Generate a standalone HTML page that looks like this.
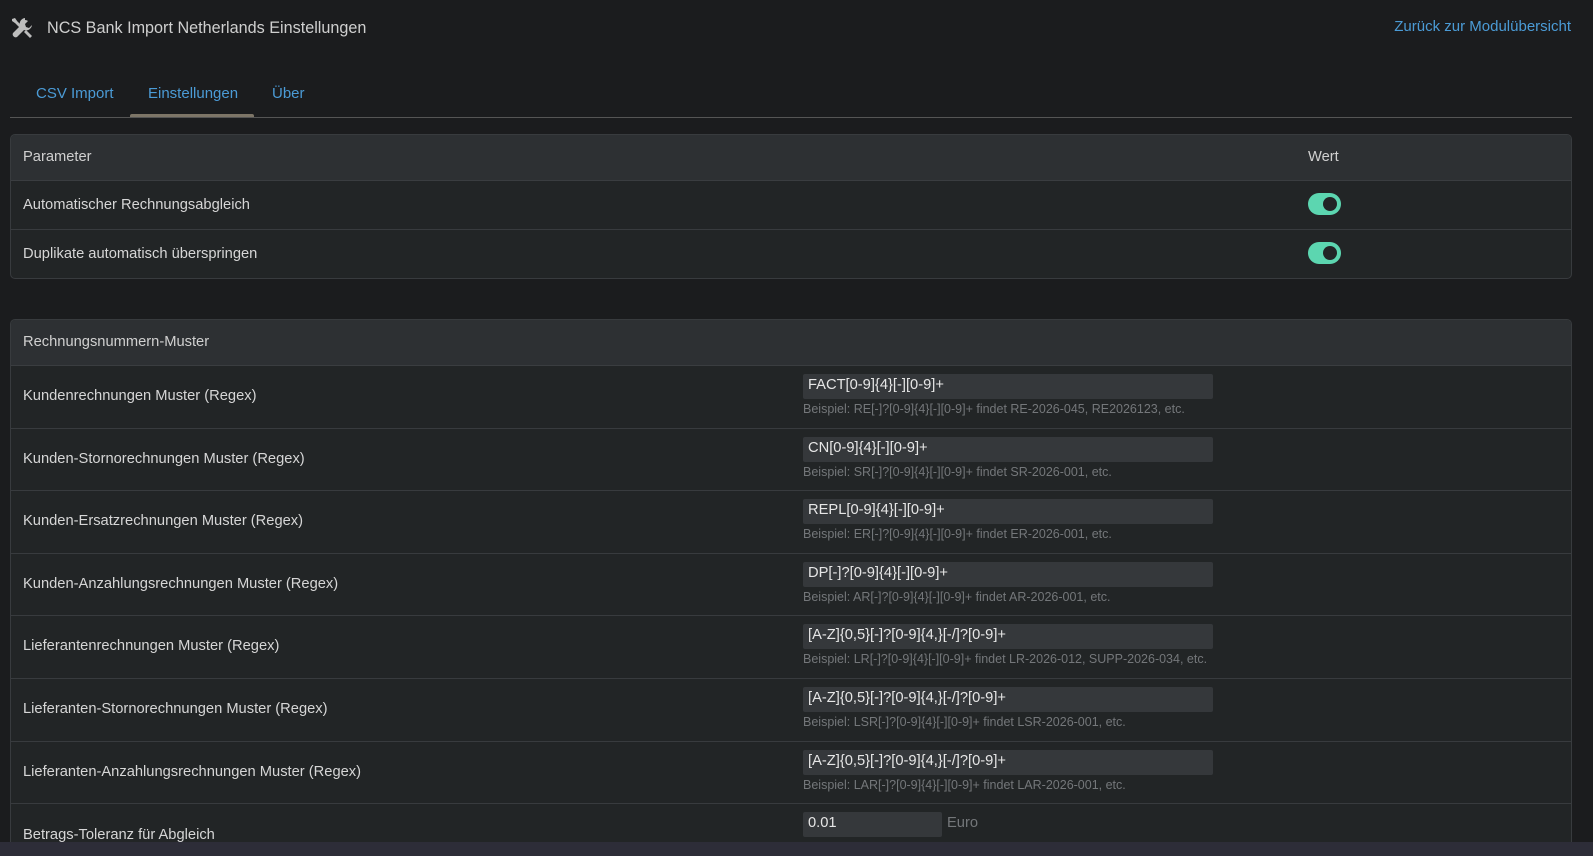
<!DOCTYPE html>
<html><head><meta charset="utf-8"><style>
*{box-sizing:border-box;margin:0;padding:0}
html,body{width:1593px;height:856px;overflow:hidden}
body{background:#1b1c1e;font-family:"Liberation Sans",sans-serif;color:#d6d6d6;position:relative}
.abs{position:absolute}
.title{left:47px;top:19px;font-size:16.2px;color:#cfcfcf}
.link{right:22px;top:18px;font-size:15px;color:#4b9bd6}
.tab{top:85px;font-size:15px;color:#4b9bd6}
.card{position:absolute;left:10px;width:1562px;background:#222526;border:1px solid #383b3e;border-radius:5px;overflow:hidden}
.hd{background:#2d3033;border-bottom:1px solid #3a3d40;font-size:14.7px;color:#d0d0d0;position:relative}
.row{position:relative;border-bottom:1px solid #383b3e;font-size:14.7px}
.lbl{position:absolute;left:12px}
.tg{position:absolute;left:1297px;width:33px;height:22px;border-radius:11px;background:#5cd6b0}
.tg:after{content:"";position:absolute;right:4px;top:4px;width:14px;height:14px;border-radius:50%;background:#222526}
.inp{position:absolute;left:792px;width:410px;height:25px;background:#35383b;border-radius:2px;color:#e6e6e6;font-size:14.7px;padding:3px 5px}
.hint{position:absolute;left:792px;font-size:12.5px;color:#74777a}
</style></head><body>
<svg class="abs" style="left:10px;top:16px" width="24" height="24" viewBox="0 0 24 24" fill="#bdbdbd"><path d="M3 5l2-2 8 8-2 2z"/><path d="M2 3l3-1 2 3-2 2-3-2z"/><path d="M15 2a6 6 0 0 0-5 8L3 17a3 3 0 0 0 4 4l7-7a6 6 0 0 0 8-5l-3 3-3-1-1-3 3-3a6 6 0 0 0-3-1z"/><path d="M14 16l2-2 6 6-2 2z"/></svg>
<div class="abs title">NCS Bank Import Netherlands Einstellungen</div>
<div class="abs link">Zurück zur Modulübersicht</div>
<div class="abs tab" style="left:36px">CSV Import</div>
<div class="abs tab" style="left:148px">Einstellungen</div>
<div class="abs tab" style="left:272px">Über</div>
<div class="abs" style="left:10px;top:117px;width:1562px;height:1px;background:#555"></div>
<div class="abs" style="left:130px;top:114px;width:124px;height:3px;background:#7d7567;border-radius:2px 2px 0 0"></div>

<div class="card" style="top:134px;height:145px">
<div class="hd" style="height:46px"><span class="lbl" style="top:14px">Parameter</span><span class="lbl" style="left:1297px;top:14px">Wert</span></div>
<div class="row" style="height:49px"><span class="lbl" style="top:16px">Automatischer Rechnungsabgleich</span><div class="tg" style="top:12px"></div></div>
<div class="row" style="height:49px;border:0"><span class="lbl" style="top:16px">Duplikate automatisch überspringen</span><div class="tg" style="top:12px"></div></div>
</div>

<div class="card" style="top:319px;height:560px">
<div class="hd" style="height:46px"><span class="lbl" style="top:14px">Rechnungsnummern-Muster</span></div>
<div class="row" style="height:63px"><span class="lbl" style="top:22px">Kundenrechnungen Muster (Regex)</span><div class="inp" style="top:8px">FACT[0-9]{4}[-][0-9]+</div><div class="hint" style="top:36px">Beispiel: RE[-]?[0-9]{4}[-][0-9]+ findet RE-2026-045, RE2026123, etc.</div></div>
<div class="row" style="height:62px"><span class="lbl" style="top:22px">Kunden-Stornorechnungen Muster (Regex)</span><div class="inp" style="top:8px">CN[0-9]{4}[-][0-9]+</div><div class="hint" style="top:36px">Beispiel: SR[-]?[0-9]{4}[-][0-9]+ findet SR-2026-001, etc.</div></div>
<div class="row" style="height:63px"><span class="lbl" style="top:22px">Kunden-Ersatzrechnungen Muster (Regex)</span><div class="inp" style="top:8px">REPL[0-9]{4}[-][0-9]+</div><div class="hint" style="top:36px">Beispiel: ER[-]?[0-9]{4}[-][0-9]+ findet ER-2026-001, etc.</div></div>
<div class="row" style="height:62px"><span class="lbl" style="top:22px">Kunden-Anzahlungsrechnungen Muster (Regex)</span><div class="inp" style="top:8px">DP[-]?[0-9]{4}[-][0-9]+</div><div class="hint" style="top:36px">Beispiel: AR[-]?[0-9]{4}[-][0-9]+ findet AR-2026-001, etc.</div></div>
<div class="row" style="height:63px"><span class="lbl" style="top:22px">Lieferantenrechnungen Muster (Regex)</span><div class="inp" style="top:8px">[A-Z]{0,5}[-]?[0-9]{4,}[-/]?[0-9]+</div><div class="hint" style="top:36px">Beispiel: LR[-]?[0-9]{4}[-][0-9]+ findet LR-2026-012, SUPP-2026-034, etc.</div></div>
<div class="row" style="height:63px"><span class="lbl" style="top:22px">Lieferanten-Stornorechnungen Muster (Regex)</span><div class="inp" style="top:8px">[A-Z]{0,5}[-]?[0-9]{4,}[-/]?[0-9]+</div><div class="hint" style="top:36px">Beispiel: LSR[-]?[0-9]{4}[-][0-9]+ findet LSR-2026-001, etc.</div></div>
<div class="row" style="height:62px"><span class="lbl" style="top:22px">Lieferanten-Anzahlungsrechnungen Muster (Regex)</span><div class="inp" style="top:8px">[A-Z]{0,5}[-]?[0-9]{4,}[-/]?[0-9]+</div><div class="hint" style="top:36px">Beispiel: LAR[-]?[0-9]{4}[-][0-9]+ findet LAR-2026-001, etc.</div></div>
<div class="row" style="height:80px;border:0"><span class="lbl" style="top:23px">Betrags-Toleranz für Abgleich</span><div class="inp" style="top:8px;width:139px">0.01</div><span class="abs" style="left:936px;top:11px;color:#74777a;font-size:14.7px">Euro</span></div>
</div>
<div class="abs" style="left:0;top:842px;width:1593px;height:30px;background:#2d2d38;z-index:5"></div>
</body></html>
